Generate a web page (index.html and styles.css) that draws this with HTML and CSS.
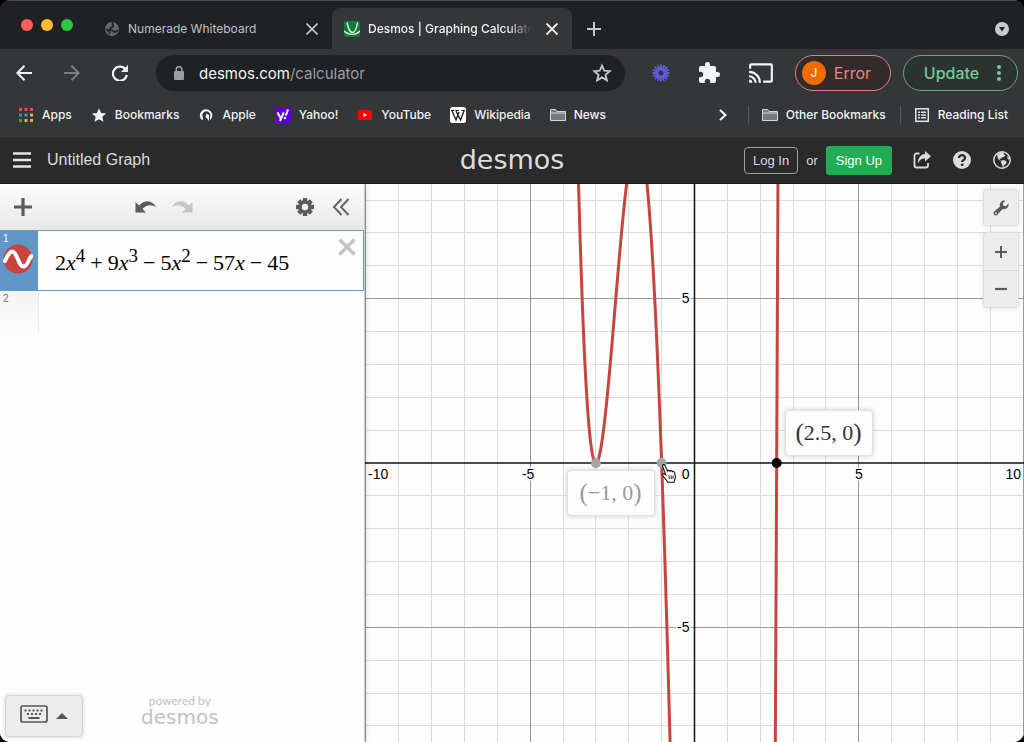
FILE: index.html
```html
<!DOCTYPE html>
<html lang="en">
<head>
<meta charset="utf-8">
<title>Desmos | Graphing Calculator</title>
<link rel="stylesheet" href="styles.css">
</head>
<body>
<div class="window">
  <div class="tabstrip">
    <div class="lights">
      <button class="light light-red" aria-label="Close window"></button>
      <button class="light light-yellow" aria-label="Minimize window"></button>
      <button class="light light-green" aria-label="Zoom window"></button>
    </div>
    <div class="tab">
      <svg class="tab-icon" viewBox="0 0 16 16"><circle cx="8" cy="8" r="7" fill="#66696c"/><path d="M9 1.500C7.500 3 10 4 9 5.500S6.500 6 6 8 9.500 9 10 10.500 13 10 14 9M2 8.500C4 8.500 5.500 10 5.500 13" fill="none" stroke="#26282b" stroke-width="2"/></svg>
      <span class="tab-title">Numerade Whiteboard</span>
      <button class="tab-close" aria-label="Close tab"><svg viewBox="0 0 12 12"><path d="M0.500 0.500l11 11M11.500 0.500l-11 11" stroke="#c6c8cb" stroke-width="1.600"/></svg></button>
    </div>
    <div class="tab tab-active">
      <svg class="tab-icon" viewBox="0 0 16 16"><rect width="16" height="16" rx="1.500" fill="#127a3d"/><path d="M3 1.500C4.500 9 6 11.500 8.500 11.500S12.500 8 13.500 1.500M0 10C4 14.500 12.500 14.500 16 10" fill="none" stroke="#e9f5ee" stroke-width="1.400"/></svg>
      <span class="tab-title">Desmos | Graphing Calculator</span>
      <button class="tab-close" aria-label="Close tab"><svg viewBox="0 0 12 12"><path d="M0.500 0.500l11 11M11.500 0.500l-11 11" stroke="#fff" stroke-width="1.800"/></svg></button>
    </div>
    <button class="new-tab" aria-label="New tab"><svg viewBox="0 0 14 14"><path d="M7 0v14M0 7h14" stroke="#c6c8cb" stroke-width="2"/></svg></button>
    <button class="tab-search" aria-label="Search tabs"><svg viewBox="0 0 14 14"><circle cx="7" cy="7" r="7" fill="#c9cbce"/><path d="M4 5h6L7 9.500z" fill="#202124"/></svg></button>
  </div>

  <div class="toolbar">
    <button class="nav" aria-label="Back"><svg viewBox="0 0 16 16"><path d="M16 8H1.500M8.500 0.800L1.300 8l7.200 7.200" fill="none" stroke="#f1f3f4" stroke-width="2"/></svg></button>
    <button class="nav" aria-label="Forward"><svg viewBox="0 0 16 16"><path d="M0 8h14.500M7.500 0.800L14.700 8l-7.200 7.200" fill="none" stroke="#7c7e81" stroke-width="2"/></svg></button>
    <button class="nav" aria-label="Reload"><svg viewBox="0 0 16 16"><path d="M13.500 4.500A7 7 0 1 0 14.800 10" fill="none" stroke="#f1f3f4" stroke-width="2.200"/><path d="M16 0v7H9z" fill="#f1f3f4"/></svg></button>
    <form class="omnibox">
      <svg class="lock" viewBox="0 0 10 14"><rect y="5" width="10" height="9" rx="1" fill="#9a9da1"/><path d="M2.200 6V3.500a2.800 2.800 0 0 1 5.600 0V6" fill="none" stroke="#9a9da1" stroke-width="1.500"/></svg>
      <div class="url" role="textbox" aria-label="Address" contenteditable="true" spellcheck="false"><span class="url-host">desmos.com</span>/calculator</div>
      <button type="button" class="star" aria-label="Bookmark this page"><svg viewBox="0 0 24 24"><path d="M12 3l2.600 6.200 6.700.600-5.100 4.400 1.600 6.600L12 17.300l-5.800 3.500 1.600-6.600-5.100-4.400 6.700-.600z" fill="none" stroke="#c6c8cb" stroke-width="2.200"/></svg></button>
    </form>
    <div class="extensions">
      <button class="ext" aria-label="Loom"><svg class="ext-small" viewBox="-10 -10 20 20"><g stroke="#5f5be0" stroke-width="2.100"><path d="M0-9.500V9.500M-9.500 0H9.500M-6.700-6.700L6.700 6.700M6.700-6.700L-6.700 6.700M-3.600-8.800L3.600 8.800M3.600-8.800L-3.600 8.800M-8.800-3.600L8.800 3.600M8.800-3.600L-8.800 3.600"/></g><circle r="4.600" fill="#5f5be0"/><circle r="2.800" fill="#353638"/></svg></button>
      <button class="ext" aria-label="Extensions"><svg viewBox="1 1 22 22"><path d="M20.500 11H19V7a2 2 0 0 0-2-2h-4V3.500a2.500 2.500 0 0 0-5 0V5H4a2 2 0 0 0-2 2v3.800h1.500a2.700 2.700 0 0 1 0 5.400H2V20a2 2 0 0 0 2 2h3.800v-1.500a2.700 2.700 0 0 1 5.400 0V22H17a2 2 0 0 0 2-2v-4h1.500a2.500 2.500 0 0 0 0-5z" fill="#f1f3f4"/></svg></button>
      <button class="ext ext-cast" aria-label="Cast"><svg viewBox="0 2 24 20"><path d="M21 3H3a2 2 0 0 0-2 2v3h2V5h18v14h-7v2h7a2 2 0 0 0 2-2V5a2 2 0 0 0-2-2zM1 18v3h3a3 3 0 0 0-3-3zm0-4v2a5 5 0 0 1 5 5h2a7 7 0 0 0-7-7zm0-4v2a9 9 0 0 1 9 9h2A11 11 0 0 0 1 10z" fill="#f1f3f4"/></svg></button>
    </div>
    <button class="pill pill-error"><span class="avatar">J</span>Error</button>
    <button class="pill pill-update">Update<svg viewBox="0 0 4 16"><g fill="#74c994"><circle cx="2" cy="2" r="2"/><circle cx="2" cy="8" r="2"/><circle cx="2" cy="14" r="2"/></g></svg></button>
  </div>

  <nav class="bookmarks">
    <a class="bm" href="#"><svg viewBox="0 0 16 16"><g fill="#dd5144"><path d="M1 1h3v3H1zM6.500 1h3v3h-3zM12 1h3v3h-3z"/></g><path d="M1 6.500h3v3H1zM1 12h3v3H1z" fill="#3c9d58"/><path d="M6.500 6.500h3v3h-3z" fill="#4a8af4"/><path d="M12 6.500h3v3h-3zM6.500 12h3v3h-3zM12 12h3v3h-3z" fill="#e5b338"/></svg>Apps</a>
    <a class="bm" href="#"><svg viewBox="0 0 16 16"><path d="M8 1.200l2.100 4.700 5.100.500-3.900 3.400 1.200 5L8 12.200l-4.500 2.600 1.200-5L.800 6.400l5.100-.500z" fill="#f1f3f4"/></svg>Bookmarks</a>
    <a class="bm" href="#"><svg viewBox="0 0 16 16"><path d="M4.500 13.500A6.200 6.200 0 1 1 12 13.200V10A4 4 0 1 0 5 10.500z" fill="#f1f3f4"/><path d="M8.500 6.500l2.500 1.500v6L9 11.500 7.500 10z" fill="#f1f3f4"/></svg>Apple</a>
    <a class="bm" href="#"><svg viewBox="0 0 16 16"><rect width="16" height="16" rx="1" fill="#5f01d1"/><path d="M2.500 5.500l3 5.500M8.800 5.500L5 14" stroke="#fff" stroke-width="2"/><path d="M13 2.500l-2.200 6" stroke="#fff" stroke-width="2"/><circle cx="10" cy="11" r="1.200" fill="#fff"/></svg>Yahoo!</a>
    <a class="bm" href="#"><svg viewBox="0 0 16 16"><rect x="1" y="3" width="14" height="10" rx="2" fill="#f00"/><path d="M6.500 6v4l3.500-2z" fill="#fff"/></svg>YouTube</a>
    <a class="bm" href="#"><svg viewBox="0 0 16 16"><rect width="16" height="16" rx="2.500" fill="#fff"/><path d="M2 4l4 9 3-8M6 4l4.500 9L14 4" fill="none" stroke="#222" stroke-width="1.400"/><path d="M1 3.500h3.500M5.500 3.500h3.500M11.500 3.500H15" stroke="#222"/></svg>Wikipedia</a>
    <a class="bm" href="#"><svg viewBox="0 0 16 16"><path d="M.500 13.500v-11h5l1.500 2h8.500v9z" fill="#77797c" stroke="#d5d7d9"/><path d="M.500 6h15" stroke="#d5d7d9"/></svg>News</a>
    <button class="bm-more" aria-label="More bookmarks"><svg viewBox="0 0 8 12"><path d="M1 1l5.500 5L1 11" fill="none" stroke="#f1f3f4" stroke-width="2.200"/></svg></button>
    <a class="bm bm-div" href="#"><svg viewBox="0 0 16 16"><path d="M.500 13.500v-11h5l1.500 2h8.500v9z" fill="#77797c" stroke="#d5d7d9"/><path d="M.500 6h15" stroke="#d5d7d9"/></svg>Other Bookmarks</a>
    <a class="bm bm-div" href="#"><svg viewBox="0 0 16 16"><rect x="1.800" y="1.800" width="12.500" height="12.500" fill="none" stroke="#e3e5e7" stroke-width="1.500"/><path d="M4 5.200h2M7 5.200h5M4 8h2M7 8h5M4 10.800h2M7 10.800h5" stroke="#e3e5e7" stroke-width="1.400"/></svg>Reading List</a>
  </nav>

  <header class="header">
    <div class="header-start">
      <button class="menu" aria-label="Open menu"><svg viewBox="0 0 18 16"><path d="M0 1.500h18M0 8h18M0 14.500h18" stroke="#e4e4e4" stroke-width="2.400"/></svg></button>
      <button class="graph-title">Untitled Graph</button>
    </div>
    <div class="logo">desmos</div>
    <div class="account">
      <button class="login">Log In</button>
      <span class="or">or</span>
      <button class="signup">Sign Up</button>
      <button class="hicon" aria-label="Share"><svg viewBox="0 0 18 18"><path d="M6.500 2.500H3.500A2 2 0 0 0 1.500 4.500v10a2 2 0 0 0 2 2H13a2 2 0 0 0 2-2V12" fill="none" stroke="#dcdcdc" stroke-width="1.800"/><path d="M12 0l6 5.200-6 5.300V7.500C8.500 7.300 6.500 9 5 12.500 4.500 7 8 3.300 12 3z" fill="#dcdcdc"/></svg></button>
      <button class="hicon" aria-label="Help"><svg viewBox="0 0 18 18"><circle cx="9" cy="9" r="9" fill="#dcdcdc"/><path d="M6 7c0-4 6.200-3.700 6 0 0 2-2.800 2-2.800 4" fill="none" stroke="#2a2a2a" stroke-width="2.300"/><circle cx="9.200" cy="13.800" r="1.400" fill="#2a2a2a"/></svg></button>
      <button class="hicon" aria-label="Language"><svg viewBox="0 0 18 18"><circle cx="9" cy="9" r="8.200" fill="none" stroke="#dcdcdc" stroke-width="1.500"/><path d="M4 3.500L8 1l3 .500-.500 1.500 2 1-1.500 2-2 .300-1 1.500-1.500-.300.500 1.500 1.200 1L7 9.800 4.800 7.500 4.500 5.500zM8.500 9.500l2.500-.500 2.800 1.800-1 2.200-1.500 1.200L10 17l-1-3.500-1.200-2zM14.500 4.500l2 3-.300 1.500-1.800-1.500z" fill="#dcdcdc"/></svg></button>
    </div>
  </header>

  <main class="main">
    <section class="panel">
      <div class="panel-bar">
        <button class="pbtn" aria-label="Add item"><svg viewBox="0 0 18 18"><path d="M9 0v18M0 9h18" stroke="#5b5b5b" stroke-width="3.200"/></svg></button>
        <div class="history">
          <button class="pbtn" aria-label="Undo"><svg class="wide" viewBox="0 0 22 14"><path d="M0.500 2v10.500H11L7.500 9C11 4.500 17 4 21.500 7.500 17-.500 9.500-.500 4 5.500z" fill="#5b5b5b"/></svg></button>
          <button class="pbtn" aria-label="Redo"><svg class="wide" viewBox="0 0 22 14"><path d="M21.500 2v10.500H11L14.500 9C11 4.500 5 4 .500 7.500 5-.500 12.500-.500 18 5.500z" fill="#c4c4c4"/></svg></button>
        </div>
        <div class="panel-end">
          <button class="pbtn" aria-label="Edit list"><svg viewBox="-9 -9 18 18"><g stroke="#5b5b5b" stroke-width="4.400"><path d="M0-9V9M-9 0H9M-6.300-6.300L6.300 6.300M6.300-6.300L-6.300 6.300"/></g><circle r="6.800" fill="#5b5b5b"/><circle r="3.200" fill="#f2f2f2"/></svg></button>
          <button class="pbtn" aria-label="Hide list"><svg viewBox="0 0 18 18"><path d="M9.500 1L2 9l7.500 8M16.500 1L9 9l7.500 8" fill="none" stroke="#666" stroke-width="2"/></svg></button>
        </div>
      </div>
      <div class="expr expr-active">
        <div class="gutter">
          <span class="num">1</span>
          <button class="curve-btn" aria-label="Hide curve"><svg viewBox="0 0 30 30"><circle cx="15" cy="15" r="14.500" fill="#c74440"/><path d="M2 17C5.500 9 9 5 12 9.500S17 23.500 21 22.500 25.500 15 28.500 12" fill="none" stroke="#fff" stroke-width="4" stroke-linecap="round"/></svg></button>
        </div>
        <div class="math" role="textbox" aria-label="Expression 1" contenteditable="true" spellcheck="false">2<i>x</i><sup>4</sup><span class="op">+</span>9<i>x</i><sup>3</sup><span class="op">−</span>5<i>x</i><sup>2</sup><span class="op">−</span>57<i>x</i><span class="op">−</span>45</div>
        <button class="remove" aria-label="Delete expression"><svg viewBox="0 0 18 18"><path d="M1.500 1.500l15 15M16.500 1.500l-15 15" stroke="#c4c4c4" stroke-width="3.400"/></svg></button>
      </div>
      <div class="expr expr-new"><div class="gutter"><span class="num">2</span></div></div>
      <div class="panel-foot">
        <button class="keypad" aria-label="Open keypad">
          <svg class="kb" viewBox="0 0 28 18"><rect x="1" y="1" width="26" height="16" rx="2" fill="none" stroke="#555" stroke-width="1.700"/><path d="M4.500 5.500h19M7 9h15" stroke="#555" stroke-width="2" stroke-dasharray="2 2"/><path d="M8.500 13h11" stroke="#555" stroke-width="2"/></svg>
          <svg class="up" viewBox="0 0 12 6"><path d="M6 0l6 6H0z" fill="#555"/></svg>
        </button>
        <div class="powered"><span class="powered-by">powered by</span><span class="powered-logo">desmos</span></div>
      </div>
    </section>

    <section class="graph">
      <svg class="plot" id="plot" role="img" aria-label="Graph of the expression"></svg>
      <div class="point-label point-left"><span class="paren">(</span>−1,&nbsp;0<span class="paren">)</span></div>
      <div class="point-label point-right"><span class="paren">(</span>2.5,&nbsp;0<span class="paren">)</span></div>
      <svg class="hand" viewBox="0 0 16 22"><path d="M1 2.500C.500.500 2.800 0 3.500 1.500L6.500 8C7 6.500 8.800 6.500 9.200 8 10 6.800 11.500 7.200 11.800 8.500 13 7.700 14.200 8.500 14.300 10L15 14c.200 3-1.200 3.500-1.500 6H6.500C5.500 17 2.500 15.500 1.300 12.800.500 11 2 10 3.500 11.200l1 .800z" fill="#fff" stroke="#111" stroke-width="1.200"/><path d="M7.800 12.500l.600 4M10.200 12.500l.400 4M12.500 12.500v4" stroke="#111"/></svg>
      <div class="controls">
        <button class="ctl ctl-alone" aria-label="Graph settings"><svg viewBox="0 0 16 16"><path d="M15.500 3.500A4.700 4.700 0 0 1 9.500 9L4.500 14.800A2.300 2.300 0 0 1 1.200 11.500L7 6.500A4.700 4.700 0 0 1 12.500.500L9.800 3.200l.500 2.500 2.500.500z" fill="#5b5b5b"/><circle cx="2.900" cy="13.200" r=".900" fill="#eee"/></svg></button>
        <div class="zoom">
          <button class="ctl" aria-label="Zoom in"><svg viewBox="0 0 12 12"><path d="M6 0v12M0 6h12" stroke="#5b5b5b" stroke-width="2"/></svg></button>
          <button class="ctl" aria-label="Zoom out"><svg viewBox="0 0 12 12"><path d="M0 6h12" stroke="#5b5b5b" stroke-width="2.200"/></svg></button>
        </div>
      </div>
    </section>
  </main>
</div>
<script src="graph.js"></script>
</body>
</html>
```
FILE: styles.css
```css
* { box-sizing: border-box; }
body {
  margin: 0;
  background: #000;
  font-family: "Liberation Sans", sans-serif;
}
button {
  margin: 0;
  padding: 0;
  border: 0;
  background: none;
  font: inherit;
  color: inherit;
  cursor: pointer;
  display: flex;
  align-items: center;
  justify-content: center;
  flex: none;
}
svg { display: block; flex: none; }
[contenteditable] { outline: none; }

.window {
  display: flex;
  flex-direction: column;
  height: 100vh;
  border-radius: 10px;
  overflow: hidden;
  background: #353638;
  font-family: Inter, sans-serif;
}

/* Tab strip */
.tabstrip {
  display: flex;
  flex: none;
  height: 49px;
  padding: 7px 15px 0 21px;
  background: #202124;
  border-top: 1px solid #4a4c4e;
}
.lights { display: flex; gap: 8px; padding-top: 11px; width: 71px; }
.light { width: 12px; height: 12px; border-radius: 50%; }
.light-red { background: #ff5f57; }
.light-yellow { background: #febc2e; }
.light-green { background: #28c840; }
.tab {
  display: flex;
  align-items: center;
  width: 240px;
  padding: 0 14px 0 12px;
  gap: 8px;
  color: #bfc1c4;
  font-size: 12px;
}
.tab-active {
  background: #353638;
  border-radius: 8px 8px 0 0;
  color: #f1f3f4;
}
.tab-icon { width: 16px; height: 16px; }
.tab-title {
  flex: 1;
  overflow: hidden;
  white-space: nowrap;
}
.tab-active .tab-title {
  font-weight: 500;
  -webkit-mask-image: linear-gradient(to right, #000 85%, transparent);
  mask-image: linear-gradient(to right, #000 85%, transparent);
}
.tab-close svg { width: 12px; height: 12px; }
.tab-close { padding-left: 6px; }
.new-tab { padding: 0 15px; }
.new-tab svg, .tab-search svg { width: 14px; height: 14px; }
.tab-search { margin-left: auto; }

/* Navigation toolbar */
.toolbar {
  display: flex;
  flex: none;
  align-items: center;
  height: 48px;
  padding: 0 6px 0 16px;
}
.nav { width: 16px; margin-right: 32px; }
.nav svg { width: 16px; height: 16px; }
.nav:nth-child(3) { margin-right: 28px; }
.omnibox {
  display: flex;
  align-items: center;
  flex: 1;
  height: 36px;
  padding: 0 13px 0 18px;
  border-radius: 18px;
  background: #202124;
}
.lock { width: 10px; height: 14px; margin-right: 15px; }
.url { flex: 1; color: #9a9da1; font-size: 15px; white-space: nowrap; }
.url-host { color: #f1f3f4; }
.star svg { width: 20px; height: 20px; }
.extensions { display: flex; padding: 0 18px 0 24px; gap: 24px; }
.ext { width: 24px; }
.ext svg { width: 22px; height: 22px; }
.ext .ext-small { width: 18px; height: 18px; }
.ext-cast { width: 32px; }
.ext.ext-cast svg { width: 26px; height: 22px; }
.pill {
  height: 36px;
  border-radius: 18px;
  font-size: 16px;
}
.pill-error {
  width: 96px;
  margin-right: 12px;
  padding-right: 13px;
  gap: 8px;
  border: 1px solid #e08280;
  background: #332a2c;
  color: #ee8584;
}
.pill-update {
  width: 115px;
  padding-left: 4px;
  gap: 18px;
  border: 1px solid #6aa582;
  background: #2a3330;
  color: #74c994;
  font-weight: 500;
}
.pill-update svg { width: 4px; height: 16px; }
.avatar {
  width: 24px;
  height: 24px;
  border-radius: 50%;
  background: #ec6c00;
  color: #fff;
  font-size: 12px;
  line-height: 24px;
}

/* Bookmarks */
.bookmarks {
  display: flex;
  flex: none;
  align-items: center;
  height: 40px;
  padding: 0 16px 5px 18px;
  gap: 19px;
  color: #f1f3f4;
  font-size: 12px;
  font-weight: 500;
}
.bm {
  display: flex;
  align-items: center;
  gap: 8px;
  color: inherit;
  text-decoration: none;
  white-space: nowrap;
}
.bm svg { width: 16px; height: 16px; }
.bm-more { margin-left: auto; }
.bm-more svg { width: 8px; height: 12px; }
.bm-div { border-left: 1px solid #56585b; padding-left: 13px; margin-left: -5px; height: 18px; }
.bm-more + .bm-div { margin-left: 2px; }

/* Calculator header */
.header {
  display: grid;
  grid-template-columns: 1fr auto 1fr;
  align-items: center;
  flex: none;
  height: 47px;
  padding: 0 12px;
  background: #2a2a2a;
  border-bottom: 1px solid #161616;
  color: #dcdcdc;
  font-family: "Liberation Sans", sans-serif;
}
.header-start { display: flex; align-items: center; gap: 16px; }
.menu { padding-left: 1px; }
.menu svg { width: 18px; height: 16px; }
.graph-title { font-size: 16px; }
.logo {
  font-family: "DejaVu Sans", sans-serif;
  font-size: 27px;
  line-height: 40px;
}
.account {
  display: flex;
  align-items: center;
  justify-content: flex-end;
  font-size: 13px;
  white-space: nowrap;
}
.login {
  height: 27px;
  padding: 0 8px;
  border: 1px solid #a0a0a0;
  border-radius: 4px;
}
.or { padding: 0 8px; }
.signup {
  height: 29px;
  margin-right: 20px;
  padding: 0 10px;
  border-radius: 3px;
  background: #1fae54;
  color: #fff;
}
.hicon { width: 20px; margin-left: 20px; }
.signup + .hicon { margin-left: 0; }
.hicon svg { width: 18px; height: 18px; }

/* Expression panel */
.main { display: flex; flex: 1; min-height: 0; background: #fdfdfd; }
.panel {
  position: relative;
  z-index: 1;
  display: flex;
  flex-direction: column;
  flex: none;
  width: 365px;
  background: #fdfdfd;
  border-right: 1px solid #ccc;
  box-shadow: 0 0 6px rgba(0, 0, 0, 0.2);
}
.panel-bar {
  display: flex;
  align-items: center;
  justify-content: space-between;
  flex: none;
  height: 46px;
  padding: 0 14px;
  background: linear-gradient(#fcfcfc, #e8e8e8);
}
.history { display: flex; gap: 14px; }
.panel-end { display: flex; gap: 18px; }
.pbtn svg { width: 18px; height: 18px; }
.pbtn .wide { width: 22px; height: 14px; }
.expr { display: flex; flex: none; }
.expr-active {
  height: 61px;
  border: 1px solid #6a9cc8;
  border-left: 0;
}
.gutter { width: 38px; padding: 2px 3px; font-size: 10px; line-height: 11px; font-family: "Liberation Sans", sans-serif; }
.num { display: block; }
.expr-active .gutter { background: #6295c8; color: #fff; }
.curve-btn svg { width: 30px; height: 30px; }
.math {
  flex: 1;
  align-self: center;
  padding: 4px 0 0 17px;
  font-family: "Liberation Serif", serif;
  font-size: 22px;
  line-height: 32px;
  white-space: nowrap;
  color: #000;
}
.math sup { font-size: 19px; line-height: 0; vertical-align: 8px; }
.math .op { padding: 0 5px; }
.remove { align-self: flex-start; padding: 7px 7px 0 0; }
.remove svg { width: 18px; height: 18px; }
.expr-new .gutter {
  height: 42px;
  background: linear-gradient(#f3f3f3, #fdfdfd);
  box-shadow: 1px 0 #ececec;
  color: #777;
}
.panel-foot { display: flex; margin-top: auto; padding: 0 5px 5px; gap: 58px; }
.keypad {
  width: 78px;
  height: 42px;
  gap: 8px;
  padding-bottom: 4px;
  border: 1px solid #d4d4d4;
  border-radius: 4px;
  background: #ececec;
  box-shadow: 0 0 4px rgba(0, 0, 0, 0.15);
}
.kb { width: 28px; height: 18px; }
.up { width: 12px; height: 6px; margin-top: 4px; }
.powered { display: flex; flex-direction: column; align-items: center; color: #c2c2c2; }
.powered-by { font-size: 12px; line-height: 12px; font-family: Lato, sans-serif; }
.powered-logo { font-family: "DejaVu Sans", sans-serif; font-size: 20px; line-height: 20px; }

/* Graph */
.graph { position: relative; flex: 1; min-width: 0; overflow: hidden; }
.plot { position: absolute; width: 100%; height: 100%; }
.grid-minor { stroke: #dcdcdc; }
.grid-major { stroke: #999; }
.axis { stroke: #111; stroke-width: 1.5; }
.curve { fill: none; stroke: #c74440; stroke-width: 3; stroke-linejoin: round; }
.tick {
  font: 14px "Liberation Sans", sans-serif;
  fill: #000;
  stroke: #fdfdfd;
  stroke-width: 3;
  paint-order: stroke;
}
.point-label {
  position: absolute;
  display: flex;
  align-items: center;
  justify-content: center;
  width: 88px;
  height: 46px;
  border: 1px solid #e0e0e0;
  border-radius: 4px;
  background: #fefefe;
  box-shadow: 0 0 5px rgba(0, 0, 0, 0.2);
  font-family: "Liberation Serif", serif;
  font-size: 22px;
}
.paren { font-size: 25px; }
.point-left { left: calc(50% - 128px); top: calc(50% + 7px); color: #999; }
.point-right { left: calc(50% + 90px); top: calc(50% - 53px); color: #333; }
.hand { position: absolute; left: calc(50% - 34px); top: calc(50% + 1px); width: 16px; height: 20px; }
.controls { position: absolute; top: 5px; right: 5px; display: flex; flex-direction: column; gap: 6px; }
.ctl { width: 36px; height: 37px; }
.ctl svg { width: 12px; height: 12px; }
.ctl-alone, .zoom {
  border: 1px solid #dedede;
  border-radius: 4px;
  background: #ededed;
  box-shadow: 0 0 4px rgba(0, 0, 0, 0.12);
}
.ctl-alone svg { width: 16px; height: 16px; }
.zoom .ctl { width: 34px; }
.zoom .ctl + .ctl { border-top: 1px solid #d8d8d8; }
```
FILE: graph.js
```js
const plot = document.getElementById("plot");
const NS = "http://www.w3.org/2000/svg";
const f = x => 2 * x ** 4 + 9 * x ** 3 - 5 * x ** 2 - 57 * x - 45;

function add(name, attrs, text) {
  const el = document.createElementNS(NS, name);
  for (const key in attrs) el.setAttribute(key, attrs[key]);
  if (text) el.textContent = text;
  plot.appendChild(el);
}

function draw() {
  plot.textContent = "";
  const w = plot.clientWidth, h = plot.clientHeight;
  const unit = w / 20.05, ox = w / 2, oy = h / 2;
  const snap = v => Math.floor(v) + 0.5;
  const vline = (i, cls) => add("line", { x1: snap(ox + i * unit), x2: snap(ox + i * unit), y1: 0, y2: h, class: cls });
  const hline = (i, cls) => add("line", { y1: snap(oy - i * unit), y2: snap(oy - i * unit), x1: 0, x2: w, class: cls });
  const rows = Math.floor(h / 2 / unit);

  for (let i = -10; i <= 10; i++) if (i % 5) vline(i, "grid-minor");
  for (let i = -rows; i <= rows; i++) if (i % 5) hline(i, "grid-minor");
  for (let i = -10; i <= 10; i += 5) if (i) vline(i, "grid-major");
  for (let i = -5; i <= 5; i += 10) hline(i, "grid-major");
  add("line", { x1: ox, x2: ox, y1: 0, y2: h, class: "axis" });
  add("line", { x1: 0, x2: w, y1: oy, y2: oy, class: "axis" });

  let d = "", pen = false;
  for (let x = -10; x <= 10; x += 0.005) {
    const y = f(x);
    if (Math.abs(y) < 12) {
      d += (pen ? "L" : "M") + (ox + x * unit).toFixed(2) + " " + (oy - y * unit).toFixed(2);
      pen = true;
    } else pen = false;
  }
  add("path", { d, class: "curve" });

  const tick = (x, y, s, anchor) => add("text", { x, y, class: "tick", "text-anchor": anchor }, s);
  tick(3, oy + 16, "-10", "start");
  tick(ox - 5 * unit - 2, oy + 16, "-5", "middle");
  tick(ox + 5 * unit, oy + 16, "5", "middle");
  tick(w - 3, oy + 16, "10", "end");
  tick(ox - 5, oy + 16, "0", "end");
  tick(ox - 5, oy - 5 * unit + 4, "5", "end");
  tick(ox - 5, oy + 5 * unit + 5, "-5", "end");

  add("circle", { cx: ox - 3 * unit, cy: oy, r: 5, fill: "#a6a6a6" });
  add("circle", { cx: ox - unit, cy: oy, r: 5, fill: "#a6a6a6" });
  add("circle", { cx: ox + 2.5 * unit, cy: oy, r: 5, fill: "#000" });
}

draw();
window.addEventListener("resize", draw);
```
